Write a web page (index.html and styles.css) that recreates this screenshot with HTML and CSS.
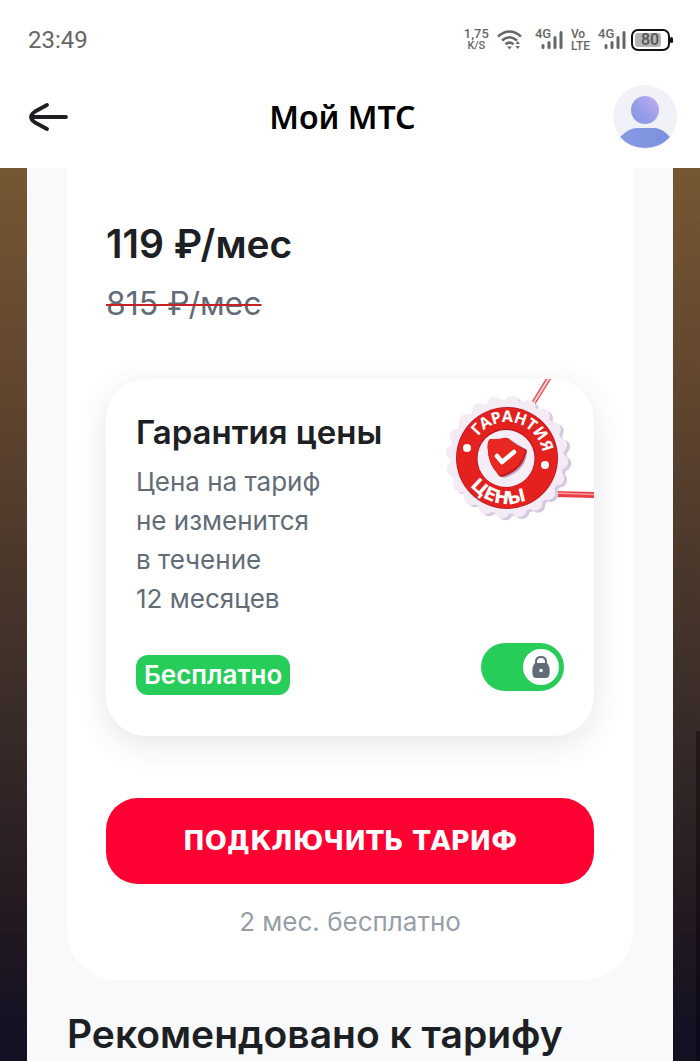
FILE: index.html
```html
<!DOCTYPE html>
<html lang="ru">
<head>
<meta charset="utf-8">
<meta name="viewport" content="width=device-width, initial-scale=1">
<title>Мой МТС</title>
<link rel="stylesheet" href="styles.css">
</head>
<body>
<div class="status">
  <time class="clock">23:49</time>
  <div class="indicators">
    <div class="speed"><span>1,75</span><span class="unit">K/S</span></div>
    <svg class="wifi" width="26" height="22" viewBox="0 0 26 22" fill="none" stroke="#666" stroke-width="2.600">
      <path d="M1 7.500Q12.500-2.500 24 7.500"/><path d="M5 11.500Q12.500 5 20 11.500"/><path d="M8.500 15.200Q12.500 12 16.500 15.200"/>
      <path d="M10 17.500h5l-2.500 3zM18.500 15l2.200-3 2.200 3zM18.500 17l2.200 3 2.200-3z" fill="#666" stroke="none"/>
    </svg>
    <div class="signal">
      <span class="net">4G</span>
      <svg width="22" height="20" viewBox="0 0 22 20" stroke="#666" stroke-width="3" stroke-linecap="round"><path d="M2 15.500v2M8 12.500v5M14 7.500v10M20 2.500v15"/></svg>
    </div>
    <div class="volte"><span>Vo</span><span>LTE</span></div>
    <div class="signal">
      <span class="net">4G</span>
      <svg width="22" height="20" viewBox="0 0 22 20" stroke="#666" stroke-width="3" stroke-linecap="round"><path d="M2 15.500v2M8 12.500v5M14 7.500v10M20 2.500v15"/></svg>
    </div>
    <div class="battery"><span class="level">80</span></div>
  </div>
</div>
<header class="header">
  <button class="back" aria-label="Назад">
    <svg width="40" height="30" viewBox="0 0 40 30" fill="none" stroke="#1d2023" stroke-width="3.800" stroke-linecap="round" stroke-linejoin="round"><path d="M38 15H3M19 3L7 9.500Q-1 15 7 20.500L19 27"/></svg>
  </button>
  <h1 class="app-title">Мой МТС</h1>
  <button class="avatar" aria-label="Профиль">
    <svg width="64" height="64" viewBox="0 0 64 64">
      <defs>
        <linearGradient id="head" x1="0" y1="1" x2="1" y2="0"><stop offset="0" stop-color="#8596e3"/><stop offset=".5" stop-color="#9b9fe8"/><stop offset="1" stop-color="#c3aff0"/></linearGradient>
        <linearGradient id="body" x1="0" y1="0" x2="1" y2="0"><stop offset="0" stop-color="#8999e4"/><stop offset="1" stop-color="#7b91df"/></linearGradient>
      </defs>
      <circle cx="32" cy="32" r="32" fill="#f0f2f8"/>
      <circle cx="32" cy="25" r="14" fill="url(#head)"/>
      <path d="M7 52Q16 43 24 43H41Q49 43 57 52Q47 63 32 63Q17 63 7 52Z" fill="url(#body)"/>
    </svg>
  </button>
</header>
<main class="backdrop">
  <div class="panel">
    <section class="tariff">
      <p class="price">119 ₽/мес</p>
      <p class="old-price"><s>815 ₽/мес</s></p>
      <article class="guarantee">
        <svg class="seal" width="164" height="170" viewBox="0 0 164 170">
          <path d="M119 8L101 36" stroke="#f3cdd0" stroke-width="5"/>
          <path d="M117 8L100 36M121 8L103 37" stroke="#df5158" stroke-width="1.300"/>
          <path d="M125 124L164 125" stroke="#e83e45" stroke-width="6"/>
          <path d="M125 123L164 124.500" stroke="#f59a9d" stroke-width="1.500"/>
          <g transform="translate(80 89) rotate(5)" fill="#d5c9e2"><circle r="57"/><circle r="54" fill="none" stroke="#d5c9e2" stroke-width="15" stroke-linecap="round" pathLength="20" stroke-dasharray="0 1"/></g>
          <g transform="translate(77 87) rotate(5)" fill="#f4ebf5"><circle r="57"/><circle r="54" fill="none" stroke="#f4ebf5" stroke-width="15" stroke-linecap="round" pathLength="20" stroke-dasharray="0 1"/></g>
          <circle cx="77" cy="88" r="51" fill="#bb1c24"/>
          <circle cx="77" cy="88" r="50" fill="#e5211f"/>
          <circle cx="76" cy="88" r="29.500" fill="#bd1820"/>
          <circle cx="76" cy="88.500" r="28.500" fill="#f7edf7"/>
          <circle cx="37" cy="78" r="4" fill="#fff"/><circle cx="115" cy="95" r="4" fill="#fff"/>
          <path d="M63 69L78 68L97 80Q97 101 74 108L70 106L61 94Z" fill="#b9a4c7"/>
          <path d="M60 69Q68 70 74 68Q77 67 80 70Q87 76 95 79Q98 80 96 84Q92 101 72 107Q69 107 67 103Q56 91 58 72Z" fill="#c21b1e"/>
          <path d="M60 69Q68 70 74 68Q77 67 80 70Q86 76 93 79Q96 80 94 84Q90 99 71 105Q68 105 66 101Q56 89 58 72Z" fill="#e92721"/>
          <path d="M67 86L72 92L84 82" fill="none" stroke="#fff" stroke-width="4.500" stroke-linecap="round" stroke-linejoin="round"/>
          <g transform="rotate(14 77 88)">
            <path id="arc-top" d="M41 88A36 36 0 0 1 113 88" fill="none"/>
            <path id="arc-bottom" d="M31 88A46 46 0 0 0 123 88" fill="none"/>
            <text class="seal-text" text-anchor="middle"><textPath href="#arc-top" startOffset="50%">ГАРАНТИЯ</textPath></text>
            <text class="seal-text seal-text-wide" text-anchor="middle"><textPath href="#arc-bottom" startOffset="50%">ЦЕНЫ</textPath></text>
          </g>
        </svg>
        <h2 class="guarantee-title">Гарантия цены</h2>
        <p class="guarantee-text">Цена на тариф<br>не изменится<br>в течение<br>12 месяцев</p>
        <div class="guarantee-foot">
          <span class="free">Бесплатно</span>
          <label class="toggle">
            <input type="checkbox" checked disabled aria-label="Гарантия цены">
            <span class="knob"><svg width="18" height="22" viewBox="0 0 18 22"><path d="M4 8V5.500Q4 1 9 1T14 5.500V8" fill="none" stroke="#626c77" stroke-width="2"/><path d="M3 7H15Q18 10 17.700 16Q17.500 22 14 22H4Q.5 22 .3 16Q0 10 3 7Z" fill="#626c77"/><circle cx="9" cy="14.500" r="1.800" fill="#fff"/></svg></span>
          </label>
        </div>
      </article>
      <button class="connect">ПОДКЛЮЧИТЬ ТАРИФ</button>
      <p class="note">2 мес. бесплатно</p>
    </section>
    <h2 class="recommended">Рекомендовано к тарифу</h2>
  </div>
  <div class="scrollbar"></div>
</main>
</body>
</html>
```
FILE: styles.css
```css
* { box-sizing: border-box; }
html, body { height: 100%; }
body {
  margin: 0;
  display: flex;
  flex-direction: column;
  overflow: hidden;
  background: #fff;
  color: #1d2023;
  font-family: Inter, "Liberation Sans", sans-serif;
}
h1, h2, p { margin: 0; }
button { border: 0; padding: 0; background: none; font: inherit; color: inherit; }
svg { display: block; }

.status {
  flex: none;
  height: 80px;
  padding: 0 30px 0 28px;
  display: flex;
  align-items: center;
  justify-content: space-between;
  font-family: Roboto, sans-serif;
  color: #666;
}
.clock { font-size: 24px; }
.indicators { display: flex; align-items: center; gap: 8px; font-weight: 500; }
.wifi { margin-right: 4px; }
.speed, .volte { display: flex; flex-direction: column; align-items: center; font-size: 13px; line-height: 12px; }
.volte { align-items: flex-start; font-size: 12px; }
.unit { font-size: 11px; }
.signal { display: flex; align-items: flex-end; position: relative; padding-left: 6px; }
.net { position: absolute; left: 0; top: -2px; font-size: 13px; line-height: 12px; }
.battery {
  position: relative;
  width: 39px;
  height: 22px;
  margin-left: -3px;
  padding: 2px;
  border: 2px solid #111;
  border-radius: 7px;
}
.battery::after {
  content: "";
  position: absolute;
  right: -5px;
  top: 6px;
  width: 3px;
  height: 6px;
  border-radius: 2px;
  background: #111;
}
.level {
  display: block;
  width: 26px;
  height: 14px;
  padding-left: 6px;
  border-radius: 3px;
  background: #b5b5b5;
  color: #555;
  font-size: 16px;
  line-height: 14px;
}

.header {
  flex: none;
  height: 88px;
  padding: 0 23px 14px 28px;
  display: grid;
  grid-template-columns: 44px 1fr 64px;
  align-items: center;
}
.back { justify-self: start; }
.app-title { text-align: center; color: #000; font: 600 32px/40px "Noto Sans", sans-serif; }
.avatar { width: 64px; height: 64px; }

.backdrop {
  flex: 1;
  min-height: 0;
  position: relative;
  padding: 0 27px;
  background: linear-gradient(#765733, #65492f 20%, #3b2d29 60%, #241a21 83%, #141124 97%);
  overflow: hidden;
}
.scrollbar { position: absolute; right: 0; top: 63%; bottom: 0; width: 4px; background: rgba(0, 0, 0, .35); }
.panel { height: 100%; padding: 0 40px; background: #f8f9fb; }
.tariff {
  padding: 52px 39px 40px;
  background: #fff;
  border-radius: 0 0 50px 50px;
}
.price { font-size: 39px; font-weight: 600; line-height: 48px; }
.old-price { margin-top: 12px; font-size: 32px; line-height: 48px; color: #626c77; }
.old-price s { text-decoration: line-through #c52127 2px; }

.guarantee {
  position: relative;
  margin-top: 51px;
  padding: 32px 30px 41px;
  border-radius: 40px;
  background: #fff;
  box-shadow: 0 8px 32px rgba(0, 0, 0, .1);
}
.seal { position: absolute; right: 0; top: -9px; clip-path: inset(9px 0 0 0 round 0 40px 0 0); }
.seal-text { font: 700 16px "Noto Sans", sans-serif; fill: #fff; }
.seal-text-wide { font-family: "DejaVu Sans", sans-serif; font-size: 18px; }
.guarantee-title { font-size: 33px; font-weight: 600; line-height: 42px; }
.guarantee-text { margin-top: 9px; font-size: 26px; line-height: 39px; color: #626c77; }
.guarantee-foot { margin-top: 25px; display: flex; align-items: flex-start; justify-content: space-between; }
.free {
  margin-top: 12px;
  padding: 0 8px;
  border-radius: 12px;
  background: #26cd58;
  color: #fff;
  font-size: 26px;
  font-weight: 600;
  line-height: 40px;
}
.toggle { position: relative; width: 83px; height: 48px; }
.toggle input { appearance: none; display: block; margin: 0; width: 100%; height: 100%; border-radius: 24px; background: #26cd58; }
.knob {
  position: absolute;
  right: 5px;
  top: 6px;
  width: 36px;
  height: 36px;
  display: grid;
  place-items: center;
  border-radius: 50%;
  background: #fff;
}
.connect {
  display: block;
  width: 100%;
  height: 86px;
  margin-top: 62px;
  border-radius: 32px;
  background: #ff0032;
  color: #fff;
  font: 700 26px/32px "DejaVu Sans", sans-serif;
}
.note { margin-top: 20px; text-align: center; font-size: 26px; line-height: 36px; color: #969fa8; }
.recommended { margin-top: 30px; font-size: 39px; font-weight: 600; line-height: 48px; white-space: nowrap; }
```
